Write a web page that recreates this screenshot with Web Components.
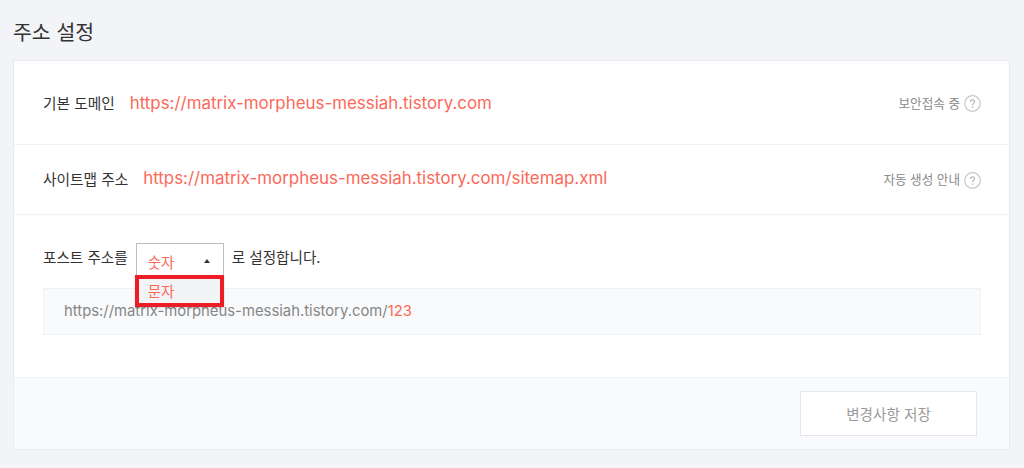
<!DOCTYPE html>
<html lang="ko"><head><meta charset="utf-8">
<style>
html,body{margin:0;padding:0;height:468px;overflow:hidden}
body{background:#f3f4f7;font-family:Inter,"Noto Sans CJK KR",sans-serif;color:#333}
</style></head><body>
<settings-page></settings-page>
<template id="t-page"><style>
:host{display:block;padding:19px 14px 0 13px}
h2{margin:0 0 14px;font-size:20.5px;font-weight:400;line-height:27px;color:#333}
.card{background:#fff;border:1px solid #e8eaee;box-sizing:border-box;height:390px;display:flex;flex-direction:column}
</style>
<h2>주소 설정</h2>
<div class="card">
<domain-row label="기본 도메인" url="https://matrix-morpheus-messiah.tistory.com" note="보안접속 중" style="height:84px"></domain-row>
<domain-row label="사이트맵 주소" url="https://matrix-morpheus-messiah.tistory.com/sitemap.xml" note="자동 생성 안내" lift style="height:70px"></domain-row>
<post-section></post-section>
<save-footer></save-footer>
</div></template>

<template id="t-row"><style>
:host{display:flex;align-items:center;box-sizing:border-box;padding:0 28px 0 29px;border-bottom:1px solid #f1f2f4;flex:none}
:host([lift]) .l,:host([lift]) .u{margin-bottom:3px}
:host([lift]) .n{margin-bottom:2px}
.l{font-size:14.7px;color:#333;margin-right:15px}
.u{font-size:16.9px;color:#fc6858;flex:1}
.n{font-size:12.6px;color:#8a8a8a;margin-right:4px}
svg{display:block;flex:none;margin-top:2px}
</style><span class="l"></span><span class="u"></span><span class="n"></span>
<svg width="17" height="17" viewBox="0 0 17 17"><circle cx="8.5" cy="8.5" r="7.8" fill="none" stroke="#c9c9c9" stroke-width="1.2"/><path d="M6.4 6.9c0-1.3.9-2.1 2.1-2.1s2.1.8 2.1 1.9c0 1.7-2.1 1.7-2.1 3.4" fill="none" stroke="#b5b5b5" stroke-width="1.2"/><rect x="7.8" y="11.4" width="1.4" height="1.4" fill="#b5b5b5"/></svg></template>

<template id="t-post"><style>
:host{display:block;box-sizing:border-box;height:163px;padding:28px 28px 0 29px;border-bottom:1px solid #f1f2f4;flex:none}
.line{display:flex;align-items:flex-start;font-size:14.6px;color:#333;height:45px}
.t{line-height:30px}
.sel{position:relative;box-sizing:border-box;width:88px;height:35px;margin:0 8px;border:1px solid #b9bdc4;background:#fff;color:#fc6858;display:flex;align-items:center;justify-content:space-between;padding:1px 13px 0 11px}
.arrow{width:0;height:0;border-left:3.5px solid transparent;border-right:3.5px solid transparent;border-bottom:4px solid #333}
.menu{position:absolute;left:-2px;top:31px;width:89px;height:32px;box-sizing:border-box;border:4px solid #ee1c25;background:#f3f4f6;color:#fc6858;padding:0 0 0 9px;line-height:26px;box-shadow:0 1px 2px rgba(0,0,0,.15);z-index:2}
.prev{box-sizing:border-box;height:47px;background:#f9fafc;border:1px solid #f0f1f4;padding:0 20px;font-size:14.85px;line-height:44px;color:#868686}
.prev b{font-weight:400;color:#fc6858}
</style>
<div class="line"><span class="t">포스트 주소를</span><div class="sel"><span>숫자</span><i class="arrow"></i><div class="menu">문자</div></div><span class="t">로 설정합니다.</span></div>
<div class="prev">https://matrix-morpheus-messiah.tistory.com/<b>123</b></div></template>

<template id="t-foot"><style>
:host{display:flex;flex:1;justify-content:flex-end;align-items:flex-start;box-sizing:border-box;padding:13px 32px 0 0;background:#f9fafc}
.b{box-sizing:border-box;width:177px;height:45px;background:#fff;border:1px solid #e4e6eb;color:#9a9a9a;font-size:14.6px;display:flex;align-items:center;justify-content:center}
</style><div class="b">변경사항 저장</div></template>

<script>
function mk(id,tag,init){customElements.define(tag,class extends HTMLElement{connectedCallback(){if(this.shadowRoot)return;const s=this.attachShadow({mode:'open'});s.appendChild(document.getElementById(id).content.cloneNode(true));init&&init(s,this)}})}
mk('t-row','domain-row',(s,h)=>{s.querySelector('.l').textContent=h.getAttribute('label');s.querySelector('.u').textContent=h.getAttribute('url');s.querySelector('.n').textContent=h.getAttribute('note')});
mk('t-post','post-section');
mk('t-foot','save-footer');
mk('t-page','settings-page');
</script>
</body></html>
